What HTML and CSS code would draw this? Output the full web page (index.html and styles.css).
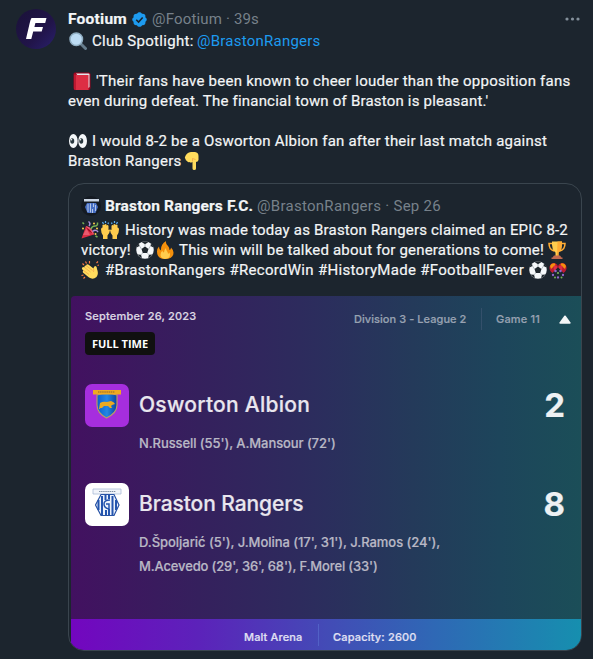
FILE: index.html
```html
<!DOCTYPE html>
<html lang="en">
<head>
<meta charset="utf-8">
<title>Footium post</title>
<link rel="stylesheet" href="styles.css">
</head>
<body>
<svg class="defs" aria-hidden="true">
  <defs>
    <linearGradient id="avatarFill" x1="0" y1="0" x2="1" y2="1"><stop stop-color="#1a1238"/><stop offset=".6" stop-color="#211449"/><stop offset="1" stop-color="#29206d"/></linearGradient>
    <linearGradient id="shieldFill"><stop stop-color="#075ed0"/><stop offset=".5" stop-color="#2387e4"/><stop offset="1" stop-color="#0743a0"/></linearGradient>
  </defs>
  <symbol id="ball" viewBox="0 0 36 36">
    <circle cx="18" cy="18" r="17.5" fill="#f5f8fa"/>
    <path fill="#20282e" d="M18 11l7 5-2.600 8h-8.800L11 16zM11 2.200Q18-.8 25 2.200L18 6.500zM1 13l6-3-1-5Q1 9 .5 15zM35 13l-6-3 1-5q5 4 5.500 10zM3 27l7 .500 2 6.500Q6 32 3 27zM33 27l-7 .500-2 6.500q6-2 9-7z"/>
    <path stroke="#77838b" stroke-width="1" fill="none" d="M18 6v5M7 10l4 6M29 10l-4 6M13.600 24L10 27.500M22.400 24l3.600 3.500"/>
  </symbol>
</svg>
<article class="post">
  <div class="avatar">
    <svg viewBox="0 0 40 40" width="40" height="40"><circle cx="20" cy="20" r="20" fill="url(#avatarFill)"/><path fill="#fff" d="M15.500 9h15l-1.300 5h-9.800l-1 4h8.600l-1.300 4.600h-8.500L15.300 30H10l3.600-15.500Q14.500 10 15.500 9z"/></svg>
  </div>
  <div class="content">
    <header class="line head">
      <span class="name">Footium</span>
      <svg class="badge" viewBox="0 0 22 22" width="17" height="17"><path fill="#1d9bf0" d="M20.400 11c0-1.300-.8-2.400-1.900-3 .4-1.200.2-2.600-.7-3.500s-2.300-1.200-3.500-.8C13.700 2.400 12.400 1.600 11 1.600s-2.700.8-3.300 2.100c-1.200-.4-2.600-.1-3.500.8S3.100 6.800 3.500 8c-1.100.6-1.900 1.700-1.900 3s.8 2.400 1.900 3c-.4 1.200-.2 2.600.7 3.500s2.300 1.200 3.500.8c.6 1.300 1.900 2.100 3.300 2.100s2.700-.8 3.300-2.100c1.200.4 2.600.1 3.500-.8s1.100-2.300.7-3.500c1.100-.6 1.900-1.700 1.900-3z"/><path fill="none" stroke="#17232d" stroke-width="2" d="M6.800 11.300l3 3 5.300-6"/></svg>
      <span class="muted t-handle">@Footium · 39s</span>
      <svg class="more" viewBox="0 0 15 4" width="15" height="4"><g fill="#84909b"><circle cx="2" cy="2" r="1.600"/><circle cx="7.500" cy="2" r="1.600"/><circle cx="13" cy="2" r="1.600"/></g></svg>
    </header>
    <p class="line first">
      <svg class="emoji" viewBox="0 0 36 36"><path stroke="#657c8c" stroke-width="6" stroke-linecap="round" d="M24 24l9 9"/><circle cx="14.500" cy="14.500" r="12.500" fill="#bddcf4" stroke="#91afc3" stroke-width="3"/></svg>
      <span class="t-club">Club Spotlight:</span><span class="link t-link">@BrastonRangers</span>
    </p>
    <p class="line book gap">
      <svg class="emoji" viewBox="0 0 36 36"><path fill="#a0041e" d="M4 1h27q4 0 4 4v27q0 4-4 4H5q-4 0-4-4V4q0-3 3-3z"/><path fill="#e1e8ed" d="M6 3h25q2 0 2 2v25l-2 2z"/><path fill="#dd2e44" d="M5 6h26v30H6q-4 0-4-4V6z"/><path fill="#be1931" d="M2 5h4v31q-4 0-4-4z"/></svg>
      <span class="t-fans">'Their fans have been known to cheer louder than the opposition fans</span>
    </p>
    <p class="line"><span class="t-even">even during defeat. The financial town of Braston is pleasant.'</span></p>
    <p class="line gap">
      <svg class="emoji eyes" viewBox="0 0 36 36"><g fill="#f5f8fa"><ellipse cx="8.700" cy="18" rx="8.700" ry="14"/><ellipse cx="27.300" cy="18" rx="8.700" ry="14"/></g><g fill="#29383f"><ellipse cx="6.500" cy="18" rx="4" ry="5.500"/><ellipse cx="24.500" cy="18" rx="4" ry="5.500"/></g><g fill="#fff"><circle cx="5" cy="15.500" r="1.500"/><circle cx="23" cy="15.500" r="1.500"/></g></svg>
      <span class="t-would">I would 8-2 be a Osworton Albion fan after their last match against</span>
    </p>
    <p class="line"><span class="t-town">Braston Rangers</span>
      <svg class="emoji point" viewBox="0 0 36 36"><path fill="#ffdc5d" d="M2 10Q5 1 14 0h8q7 1 7 8v8q-1 4-5 4v13q0 3-3.500 3T17 33V20q-4 2-6 0-4 1-5-2-3-1-3-4-2-2-1-4z"/><path fill="none" stroke="#ef9645" stroke-width="1.300" d="M17 19v-6l6 2"/></svg>
    </p>

    <section class="quote">
      <header class="line quote-head">
        <svg class="mini" viewBox="0 0 20 20" width="20" height="20"><circle cx="10" cy="10" r="10" fill="#141a22"/><path fill="#cbd6e4" d="M3 3h15v2.500H3z"/><path fill="#476fc4" d="M6 7h9l2 4-2.500 6h-8L4 11z"/><path stroke="#b4c6e6" stroke-width="1" d="M7 8v8M9.500 7.500v9M12.500 7.500v3.500M14.500 9v6M11.500 13v4"/></svg>
        <span class="name t-club-name">Braston Rangers F.C.</span><span class="muted t-date">@BrastonRangers · Sep 26</span>
      </header>
      <div class="quote-text">
        <p class="line">
          <svg class="emoji" viewBox="0 0 36 36"><path fill="#dd2e44" d="M1 35L10 10q13 4 16 17z"/><path fill="#ea596e" d="M4 28l7-13 7 13zM10 10q12 2 16 17-9-3-16-17z"/><path fill="#a0041e" d="M11 13q8 4 12 12-8-3-12-12z"/><path fill="none" stroke="#aa8dd8" stroke-width="3" d="M15 1q5 4 1 9M23 21q7-5 11 1"/><path fill="none" stroke="#77b255" stroke-width="3" d="M20 16q2-6 8-6t5-7M3 3l3 3M29 30l4 2"/><g fill="#ffcc4d"><circle cx="26" cy="5" r="2"/><circle cx="32" cy="15" r="2"/><circle cx="4" cy="15" r="2"/><circle cx="29" cy="26" r="2"/></g></svg>
          <svg class="emoji" viewBox="0 0 36 36"><path id="hand" fill="#ffcc4d" d="M4 36v-7Q0 24 0 17q0-4 3-4V8q2-2 4 0V7q3-2 4 0v2q3-2 4 1v8q2-2 3 0-1 8-5 11v7z"/><use href="#hand" transform="matrix(-1 0 0 1 36 0)"/><path stroke="#5dadec" stroke-width="2.500" d="M3 2l2 4M9 0v4M33 2l-2 4M27 0v4M15 3l-1 3M21 3l1 3"/></svg>
          <span class="t-history">History was made today as Braston Rangers claimed an EPIC 8-2</span>
        </p>
        <p class="line">
          <span class="t-victory">victory!</span>
          <svg class="emoji ball"><use href="#ball"/></svg>
          <svg class="emoji" viewBox="0 0 36 36"><path fill="#f4900c" d="M18 36Q2 36 2 21q0-6 4-10 0 6 4 8Q9 7 20 0q-1 6 4 10 3 3 3 8 3-1 3-5 5 5 5 10 0 13-17 13z"/><path fill="#ffcc4d" d="M18 36q-9-1-9-8 0-6 4-9 0 4 3 4 0-6 4-9 0 5 3 8 1 2 1 4l3-3q4 12-9 13z"/></svg>
          <span class="t-win">This win will be talked about for generations to come!</span>
          <svg class="emoji cup" viewBox="0 0 36 36"><path fill="none" stroke="#ffac33" stroke-width="3" d="M9 5H2q0 12 10 15M27 5h7q0 12-10 15"/><path fill="#ffcc4d" d="M8 1h20q1 17-7 22v7h-6v-7Q7 18 8 1z"/><path fill="#ffac33" d="M19 1h9q1 17-7 22v7h-3z"/><path fill="#c1694f" d="M12 29h12l3 4h2v3H7v-3h2z"/></svg>
        </p>
        <p class="line">
          <svg class="emoji" viewBox="0 0 36 36"><path fill="#ffdc5d" d="M2 14q2-3 5-1Q6 9 10 9q2-4 6-1l9 7q0-5 4-5 3 1 3 6 4 10-1 16-7 6-15 1L5 24q-3-3 0-5-4-2-3-5z"/><path fill="none" stroke="#ef9645" stroke-width="1.300" d="M7 13l12 9M10 9l13 10M5 19l11 8M25 15q1 4 0 7"/><path stroke="#ff7a43" stroke-width="2.300" d="M9 1l2 4M17 0v5M3 5l3 3M31 4l3-3M33 9l3-1M1 29l4-1M5 35l3-3"/></svg>
          <span class="t-tags">#BrastonRangers #RecordWin #HistoryMade #FootballFever</span>
          <svg class="emoji tag-ball"><use href="#ball"/></svg>
          <svg class="emoji" viewBox="0 0 36 36"><path fill="#be1931" d="M1 12Q3 3 11 4q7 2 7 8L7 24q-7-5-6-12zM35 12Q33 3 25 4q-7 2-7 8l11 12q7-5 6-12z"/><path fill="#f4900c" d="M2 10Q5 3 12 5l1 3-9 8zM34 10Q31 3 24 5l-1 3 9 8z"/><path fill="#dd2e44" d="M9 10q6-3 8 3l-7 7zM27 10q-6-3-8 3l7 7z"/><g fill="#9266cc"><circle cx="13" cy="20" r="2.500"/><circle cx="23" cy="20" r="2.500"/><circle cx="8" cy="28" r="2.300"/><circle cx="28" cy="28" r="2.300"/><circle cx="18" cy="33" r="2.300"/></g><g fill="#77b255"><circle cx="18" cy="24" r="2.200"/><circle cx="12" cy="33" r="2"/><circle cx="25" cy="33" r="2"/></g></svg>
        </p>
      </div>

      <div class="match">
        <div class="match-top">
          <div class="when"><span class="t-when">September 26, 2023</span><strong class="status">FULL TIME</strong></div>
          <div class="league"><span class="division">Division 3 - League 2</span><span class="game">Game 11</span>
            <svg viewBox="0 0 12 9" width="12" height="9"><path fill="#f4f6f7" d="M5.300.8q.7-.8 1.400 0l4.800 6.800q.5 1.200-.8 1.200H1.300Q0 8.800.5 7.600z"/></svg></div>
        </div>
        <div class="team">
          <div class="crest purple"><svg viewBox="0 0 44 44" width="44" height="44"><path fill="url(#shieldFill)" stroke="#b99b67" stroke-width="1.200" d="M12 11q10-3 20 0v10q0 8-10.500 13Q12 29 12 21z"/><path fill="#efaa20" d="M8 6h28v4.500H8z"/><path stroke="#8b6430" stroke-width="1" stroke-dasharray="1.500 .6" d="M13 8h17"/><path fill="#eaaa22" d="M15 19q3-2 7-1l4-1q3 1 4 3l-3 1-1 1 1 2h-2l-2-2-4 0-2 2h-2l1-2-1 3h-1z"/></svg></div>
          <h2 class="t-albion">Osworton Albion</h2><b class="score">2</b>
        </div>
        <p class="scorers s-one">N.Russell (55'), A.Mansour (72')</p>
        <div class="team away">
          <div class="crest"><svg viewBox="0 0 44 44" width="44" height="44"><path fill="#f2f5fa" stroke="#aabbd7" stroke-width=".8" d="M8 6h28v5H8z"/><path stroke="#8091a5" stroke-width="1" stroke-dasharray="1.500 .6" d="M14 8.500h17"/><path fill="#edf3fc" stroke="#2853a5" stroke-width="1.200" d="M16 11.500h13l5 10.500-5 10.500H16L10.500 22z"/><path fill="none" stroke="#2455ae" stroke-width="2" d="M13.500 17v10M17 13v19M27.500 13v19M31 17v10M20.500 12v5M24 12v4M21 27v5M24 26v6"/><path fill="none" stroke="#2455ae" stroke-width="1.500" d="M25 17q-6 0-6 4t5 5v-5l-3 0"/></svg></div>
          <h2 class="t-rangers">Braston Rangers</h2><b class="score">8</b>
        </div>
        <p class="scorers s-two">D.Špoljarić (5'), J.Molina (17', 31'), J.Ramos (24'),</p>
        <p class="scorers s-three">M.Acevedo (29', 36', 68'), F.Morel (33')</p>
        <footer class="ground"><span class="arena">Malt Arena</span><span class="capacity">Capacity: 2600</span></footer>
      </div>
    </section>
  </div>
</article>
</body>
</html>
```
FILE: styles.css
```css
* { box-sizing: border-box; }
body { margin: 0; width: 593px; height: 659px; overflow: hidden; background: #1c252e; color: #f3f5f6; font: 400 15px/20px Roboto, sans-serif; -webkit-text-stroke: .2px; }
p, h2 { margin: 0; }
svg { display: block; flex: none; }
.defs { position: absolute; width: 0; height: 0; }
.post { display: flex; padding: 9px 12px 0 16px; }
.avatar { width: 52px; flex: none; }
.content { width: 514px; flex: none; }
.line { display: flex; align-items: center; height: 20px; white-space: nowrap; }
.first { margin-top: 2px; }
.gap { margin-top: 20px; }
.name { width: 63px; font-weight: 700; font-size: 15.5px; letter-spacing: .24px; }
.badge { margin-right: 4px; }
.muted { color: #77818a; -webkit-text-stroke: 0; }
.t-handle { letter-spacing: .167px; }
.more { margin-left: auto; margin-right: 2px; }
.emoji { width: 18px; height: 18px; margin: 0 1px; }
.t-club { width: 105px; margin-left: 4px; letter-spacing: .3px; }
.link { color: #1d9bf0; -webkit-text-stroke: 0; }
.t-link { letter-spacing: .24px; }
.book { padding-left: 4px; }
.t-fans { margin-left: 4px; letter-spacing: .24px; }
.t-even { letter-spacing: .204px; }
.t-would { margin-left: 4px; letter-spacing: .214px; }
.t-town { width: 115px; letter-spacing: .21px; }

.quote { margin-top: 12px; height: 468px; border: 1px solid #3a454e; border-radius: 16px; overflow: hidden; }
.quote-head { margin: 12px 0 0 12px; }
.mini { margin-right: 4px; }
.t-club-name { width: 152px; letter-spacing: .15px; }
.t-date { letter-spacing: .283px; }
.quote-text { margin: 4px 0 0 11px; }
.t-history { margin-left: 5px; letter-spacing: .191px; }
.t-victory { width: 54px; margin-left: 1px; letter-spacing: .2px; }
.t-win { margin-left: 4px; width: 368px; letter-spacing: .185px; }
.t-tags { margin-left: 5px; width: 423px; letter-spacing: .306px; }

.match { display: flex; flex-direction: column; height: 355px; margin: 16px 0 0 2px; border-top-left-radius: 4px; background: linear-gradient(90deg, #421160 0%, #35205d 25%, #2b2e5d 50%, #243a5a 67%, #1d455b 84%, #1b4e58 100%); font-family: Inter, sans-serif; font-weight: 500; }
.match-top { display: flex; justify-content: space-between; height: 88px; padding: 10px 10px 0 14px; font-size: 11px; }
.when { display: flex; flex-direction: column; align-items: flex-start; color: #ddd8e4; }
.t-when { letter-spacing: .2px; }
.status { display: flex; align-items: center; justify-content: center; width: 70px; height: 23px; margin-top: 6px; border-radius: 4px; background: #101010; color: #fff; font: 700 11px/15px "Open Sans", sans-serif; -webkit-text-stroke: 0; }
.league { display: flex; align-items: center; height: 26px; color: #98a2b2; }
.division { width: 127px; letter-spacing: .06px; }
.game { height: 22px; padding-left: 14px; width: 78px; border-left: 1px solid #34506b; line-height: 22px; letter-spacing: .176px; }
.team { display: flex; align-items: center; height: 43px; padding: 0 16px 0 14px; }
.away { margin-top: 52px; }
.crest { width: 44px; height: 43px; margin-right: 10px; overflow: hidden; border-radius: 7px; background: #fff; }
.purple { background: #a62ede; }
h2 { color: #e9e6ee; font-size: 21px; font-weight: 500; line-height: 30px; margin-bottom: 1px; }
.t-albion { letter-spacing: .25px; }
.t-rangers { letter-spacing: -.08px; }
.score { margin: 0 0 2px auto; color: #eef1f3; font-size: 33px; line-height: 40px; font-weight: 700; }
.scorers { margin-left: 68px; color: #b9b8c5; font-size: 13px; line-height: 23.500px; white-space: nowrap; }
.s-one { margin-top: 4px; height: 0; line-height: 24px; letter-spacing: -.08px; }
.s-two { margin-top: 5px; letter-spacing: -.04px; }
.s-three { letter-spacing: -.144px; }
.ground { display: flex; height: 32px; margin-top: auto; padding: 5px 0 0 173px; background: linear-gradient(90deg, #7306bf 0%, #5c22ba 25%, #434bb6 50%, #2e69b5 72%, #168faf 100%); color: #e1e1f4; font-size: 11px; line-height: 26px; }
.arena { width: 74px; letter-spacing: .13px; }
.capacity { padding-left: 14px; border-left: 1px solid #5261c6; height: 22px; letter-spacing: .18px; }
```
